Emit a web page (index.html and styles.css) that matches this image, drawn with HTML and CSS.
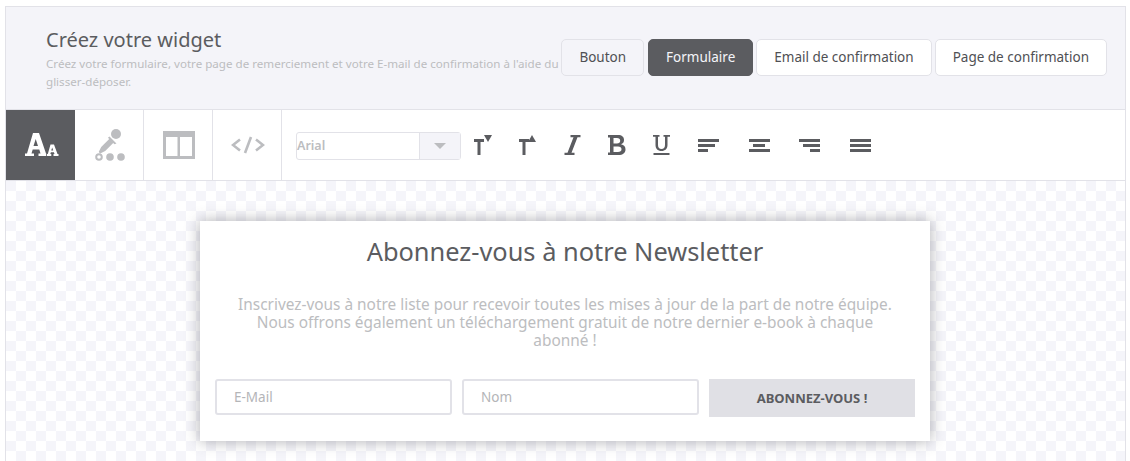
FILE: index.html
```html
<!DOCTYPE html>
<html lang="fr">
<head>
<meta charset="utf-8">
<title>Créez votre widget</title>
<link rel="stylesheet" href="styles.css">
</head>
<body>
<div class="builder">
  <header class="head">
    <div class="intro">
      <h1>Créez votre widget</h1>
      <p>Créez votre formulaire, votre page de remerciement et votre E-mail de confirmation à l'aide du glisser-déposer.</p>
    </div>
    <nav class="steps">
      <a class="step done">Bouton</a>
      <a class="step active">Formulaire</a>
      <a class="step">Email de confirmation</a>
      <a class="step">Page de confirmation</a>
    </nav>
  </header>
  <div class="toolbar">
    <div class="tab on">
      <svg width="34" height="24" viewBox="0 0 34 24" fill="#fff">
        <path fill-rule="evenodd" d="M8 0h6l7 20.500h2V23h-9.500v-2.500h2l-1.200-4H7.700l-1.200 4h2.500V23H0v-2.500h2zM10.700 6L8.500 13h4.500z"/>
        <path fill-rule="evenodd" stroke="#5b5c60" stroke-width="1.500" paint-order="stroke" d="M25.500 11.500h3.500l3.500 9.500h1v2h-5v-2h1l-.6-1.800h-3l-.6 1.800h1v2h-4.500v-2h1zM27.200 14.500l-1 3h2z"/>
      </svg>
    </div>
    <div class="tab">
      <svg class="drop" width="32" height="34" viewBox="0 0 32 34" fill="#bcbdc0">
        <circle cx="23" cy="6" r="5"/>
        <path d="M16.500 8.500l7 7-2 .8-1.300-1.300-8 8-5 2.500-1.500-1.500 2.500-5 8-8-1.300-1.300z"/>
        <circle cx="6" cy="29" r="2.800" fill="none" stroke="#bcbdc0" stroke-width="2"/>
        <circle cx="17" cy="29" r="3.800"/>
        <circle cx="28" cy="29" r="3.800"/>
      </svg>
    </div>
    <div class="tab shift">
      <svg width="32" height="28" viewBox="0 0 32 28"><path fill="#bcbdc0" fill-rule="evenodd" d="M0 0h32v28H0zM3 6v19h11.500V6zm14 0v19h12V6z"/></svg>
    </div>
    <div class="tab shift">
      <svg width="34" height="18" viewBox="0 0 34 18" fill="none" stroke="#bcbdc0" stroke-width="2.600"><path d="M9 3.500L2 9l7 5.500M25 3.500L32 9l-7 5.500M20 1l-6 16"/></svg>
    </div>
    <div class="tools">
      <div class="select"><span class="sel-text">Arial</span><span class="sel-btn"><i></i></span></div>
      <svg class="tool first" width="18" height="20" viewBox="0 0 18 20" fill="#5b5c60"><path d="M0 4h10v3H6.500v13h-3V7H0z"/><path d="M10 0h8l-4 7z"/></svg>
      <svg class="tool" width="18" height="20" viewBox="0 0 18 20" fill="#5b5c60"><path d="M0 4h10v3H6.500v13h-3V7H0z"/><path d="M9 7h8l-4-7z"/></svg>
      <svg class="tool" width="17" height="20" viewBox="0 0 17 20" fill="#5b5c60"><path d="M6.500 0H16.500v2.300h-3L7.500 17.700h3V20H0.500v-2.300h3L9.500 2.300h-3z"/></svg>
      <svg class="tool bold" width="18" height="20" viewBox="0 0 18 20" fill="#5b5c60"><path fill-rule="evenodd" d="M0 0h10c4 0 6 2 6 5 0 2-1 3.600-3 4.300 3 .6 4.500 2.500 4.500 5.200 0 3.500-2.700 5.500-7 5.500H0v-2.500h2V2.500H0zM5.500 3v5.500H9c2 0 3.200-1 3.200-2.800S11 3 9 3zm0 8.500V17H10c2.200 0 3.500-1 3.500-2.800s-1.300-2.700-3.500-2.700z"/></svg>
      <svg class="tool" width="17" height="20" viewBox="0 0 17 20" fill="#5b5c60"><path d="M0 0h6.500v1.800H5V10c0 2.600 1.300 4 3.500 4s3.500-1.400 3.500-4V1.800h-1.500V0H17v1.800h-2.500V10c0 3.700-2.300 6-6 6s-6-2.300-6-6V1.800H0zM.5 18h16v2H.5z"/></svg>
      <div class="align a-left"><i></i><i></i><i></i></div>
      <div class="align a-center"><i></i><i></i><i></i></div>
      <div class="align a-right"><i></i><i></i><i></i></div>
      <div class="align a-just"><i></i><i></i><i></i></div>
    </div>
  </div>
  <main class="canvas">
    <section class="card">
      <h2>Abonnez-vous à notre Newsletter</h2>
      <p>Inscrivez-vous à notre liste pour recevoir toutes les mises à jour de la part de notre équipe.<br>Nous offrons également un téléchargement gratuit de notre dernier e-book à chaque<br>abonné !</p>
      <form class="form">
        <input class="field" type="text" placeholder="E-Mail">
        <input class="field" type="text" placeholder="Nom">
        <button class="submit" type="button">ABONNEZ-VOUS !</button>
      </form>
    </section>
  </main>
</div>
</body>
</html>
```
FILE: styles.css
```css
* { box-sizing: border-box; }
html, body { margin: 0; height: 100%; overflow: hidden; background: #fff; }
body { padding: 6px 4px 0 5px; font-family: "Noto Sans", sans-serif; color: #5b5c60; }
.builder { border: 1px solid #e2e2e8; border-bottom: 0; height: 455px; overflow: hidden; }
.head { height: 103px; background: #f4f4f9; border-bottom: 1px solid #e2e2e8; display: flex; align-items: center; padding: 0 18px 0 40px; }
.intro { flex: 1; min-width: 0; padding-top: 2px; }
.intro h1 { margin: 0 0 3px; font-size: 20px; font-weight: 400; line-height: 24px; }
.intro p { margin: 0; font-size: 11.6px; line-height: 18px; color: #bcbdc0; }
.steps { display: flex; gap: 3px; margin-top: -2px; }
.step { height: 37px; display: flex; align-items: center; padding: 0 17px; border: 1px solid #e2e2e8; border-radius: 5px; background: #fff; font-size: 13.5px; color: #4f5054; white-space: nowrap; }
.step.done { background: #f4f4f9; margin-right: 1px; }
.step.active { background: #5b5c60; border-color: #5b5c60; color: #f4f4f9; }
.toolbar { height: 71px; display: flex; border-bottom: 1px solid #e2e2e8; background: #fff; }
.tab { width: 69px; display: flex; align-items: center; justify-content: center; border-right: 1px solid #e2e2e8; }
.tab.on { background: #5b5c60; border-right: 0; padding-left: 3px; }
.tab.shift { padding-left: 2px; }
.tools { flex: 1; display: flex; align-items: center; padding-left: 14px; }
.select { width: 165px; height: 28px; margin-top: 2px; display: flex; border: 1px solid #e2e2e8; border-radius: 3px; font-size: 12.5px; font-weight: 600; color: #bcbdc0; }
.sel-text { flex: 1; line-height: 26px; }
.sel-btn { width: 41px; background: #f4f4f9; border-left: 1px solid #e2e2e8; display: flex; align-items: center; justify-content: center; }
.sel-btn i { border: 6px solid transparent; border-top: 6px solid #bcbdc0; border-bottom: 0; }
.tool { margin-left: 27px; }
.tool.first { margin-left: 13px; }
.tool.bold { margin-left: 27px; }
.align { display: flex; flex-direction: column; gap: 2px; width: 21px; margin-left: 29.5px; }
.align i { display: block; width: 21px; height: 3px; background: #5b5c60; }
.a-left { margin-left: 28px; align-items: flex-start; }
.a-center { align-items: center; }
.a-right { align-items: flex-end; }
.a-left i:nth-child(2), .a-right i:nth-child(2) { width: 17px; }
.a-left i:nth-child(3), .a-right i:nth-child(3) { width: 10px; }
.a-center i:nth-child(2) { width: 12px; }
.canvas { height: 280px; padding-top: 40px; background-color: #fff; background-image: conic-gradient(#fff 25%, #f5f5fa 0 50%, #fff 0 75%, #f5f5fa 0); background-size: 20px 20px; }
.card { width: 730px; height: 220px; margin-left: 194px; background: #fff; box-shadow: 0 0 14px rgba(70,70,80,.45); padding: 15px 15px 0; text-align: center; }
.card h2 { margin: 0; font-size: 25.4px; font-weight: 400; line-height: 30px; color: #5b5c60; }
.card p { margin: 30px 0 0; font-size: 15.4px; line-height: 18px; color: #bcbdc0; }
.form { display: flex; align-items: flex-start; gap: 10px; margin-top: 29px; }
.field { width: 237px; height: 36px; border: 2px solid #e2e2e8; border-radius: 3px; padding: 0 17px; font: 13.5px "Noto Sans", sans-serif; background: #fff; }
.field::placeholder { color: #b4b5b8; opacity: 1; }
.submit { width: 206px; height: 38px; border: 0; background: #e0e0e5; font: 700 13px "Noto Sans", sans-serif; color: #5b5c60; }
```
